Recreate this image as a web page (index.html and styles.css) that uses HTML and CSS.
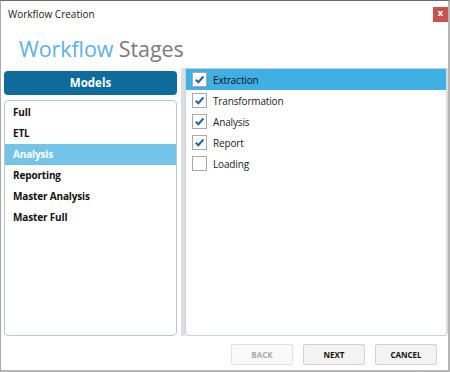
FILE: index.html
```html
<!DOCTYPE html>
<html>
<head>
<meta charset="utf-8">
<link rel="stylesheet" href="styles.css">
</head>
<body>
<div class="window">
  <div class="titlebar">
    <span class="title">Workflow Creation</span>
    <span class="close">x</span>
  </div>
  <h1 class="heading"><span class="h-blue">Workflow</span> <span class="h-gray">Stages</span></h1>
  <div class="content">
    <div class="left">
      <div class="models-header">Models</div>
      <div class="models-list">
        <div class="model">Full</div>
        <div class="model">ETL</div>
        <div class="model selected">Analysis</div>
        <div class="model">Reporting</div>
        <div class="model">Master Analysis</div>
        <div class="model">Master Full</div>
      </div>
    </div>
    <div class="splitter"></div>
    <div class="stages">
      <div class="stage selected"><span class="cb checked"><svg viewBox="0 0 14 14"><path d="M3 7.2 L5.8 10 L11.2 3.8"/></svg></span>Extraction</div>
      <div class="stage"><span class="cb checked"><svg viewBox="0 0 14 14"><path d="M3 7.2 L5.8 10 L11.2 3.8"/></svg></span>Transformation</div>
      <div class="stage"><span class="cb checked"><svg viewBox="0 0 14 14"><path d="M3 7.2 L5.8 10 L11.2 3.8"/></svg></span>Analysis</div>
      <div class="stage"><span class="cb checked"><svg viewBox="0 0 14 14"><path d="M3 7.2 L5.8 10 L11.2 3.8"/></svg></span>Report</div>
      <div class="stage"><span class="cb"></span>Loading</div>
    </div>
  </div>
  <div class="buttons">
    <button class="btn disabled">BACK</button>
    <button class="btn">NEXT</button>
    <button class="btn">CANCEL</button>
  </div>
</div>
</body>
</html>
```

FILE: styles.css
```css
html, body {
  margin: 0;
  padding: 0;
  background: #ffffff;
}
body {
  width: 450px;
  height: 372px;
  overflow: hidden;
}
.window {
  box-sizing: border-box;
  width: 450px;
  height: 372px;
  border: 1px solid #a9a9a9;
  border-top-color: #6a6a6a;
  border-right: 2px solid #b5b5b5;
  border-bottom: 2px solid #b5b5b5;
  font-family: "Open Sans", "Noto Sans", sans-serif;
  display: flex;
  flex-direction: column;
  background: #fff;
}
.titlebar {
  height: 27px;
  display: flex;
  align-items: flex-start;
  justify-content: space-between;
  padding: 0 0 0 7px;
}
.title {
  font-size: 10px;
  color: #1a1a1a;
  margin-top: 6px;
}
.close {
  width: 15px;
  height: 15px;
  margin-top: 6px;
  background: #c9524f;
  color: #fff;
  font-size: 9px;
  font-weight: bold;
  line-height: 13px;
  text-align: center;
  font-family: "DejaVu Sans", sans-serif;
}
.heading {
  margin: 0 0 0 18px;
  height: 40px;
  font-weight: normal;
  font-size: 21.5px;
  line-height: 42px;
  letter-spacing: -0.1px;
  font-family: "Open Sans", sans-serif;
}
.h-blue { color: #5db0e3; }
.h-gray { color: #7b7b7b; }
.content {
  display: flex;
  height: 268px;
  padding: 0 0 0 3px;
}
.left {
  width: 173px;
  display: flex;
  flex-direction: column;
}
.models-header {
  margin-top: 3px;
  height: 24px;
  background: #0f6b9c;
  border-radius: 4px;
  color: #fff;
  font-weight: bold;
  font-size: 11.5px;
  line-height: 24px;
  text-align: center;
}
.models-list {
  margin-top: 5px;
  flex: 1;
  border: 1px solid #b7c9d9;
  border-radius: 4px;
  padding-top: 1px;
}
.model {
  height: 21px;
  line-height: 21px;
  padding-left: 8px;
  font-size: 10px;
  font-weight: bold;
  color: #111;
  letter-spacing: -0.15px;
}
.model.selected {
  background: #74c4ea;
  color: #fff;
}
.splitter {
  width: 4px;
  margin-left: 4px;
  background: #dedede;
}
.stages {
  flex: 1;
  border: 1px solid #c4d2de;
  border-right: 2px solid #dcdcdc;
  border-radius: 0 0 4px 4px;
}
.stage {
  height: 21px;
  display: flex;
  align-items: center;
  font-size: 10px;
  color: #222;
  padding-left: 6px;
  letter-spacing: -0.15px;
}
.stage.selected {
  background: #3fb0e3;
  color: #111;
}
.cb {
  box-sizing: border-box;
  width: 15px;
  height: 15px;
  border: 1px solid #a8a8a8;
  background: #fff;
  margin-right: 6px;
  display: flex;
}
.cb svg {
  width: 13px;
  height: 13px;
}
.cb path {
  fill: none;
  stroke: #1b6aa8;
  stroke-width: 2.2;
}
.buttons {
  display: flex;
  justify-content: flex-end;
  gap: 10px;
  padding: 8px 11px 0 0;
}
.btn {
  width: 62px;
  height: 21px;
  border: 1px solid #d2d2d2;
  border-radius: 2px;
  background: #f3f3f3;
  font-family: "Open Sans", sans-serif;
  font-weight: bold;
  font-size: 8px;
  color: #111;
  padding: 0;
}
.btn.disabled {
  color: #a8a8a8;
  background: #fafafa;
  border-color: #e2e2e2;
}
```
